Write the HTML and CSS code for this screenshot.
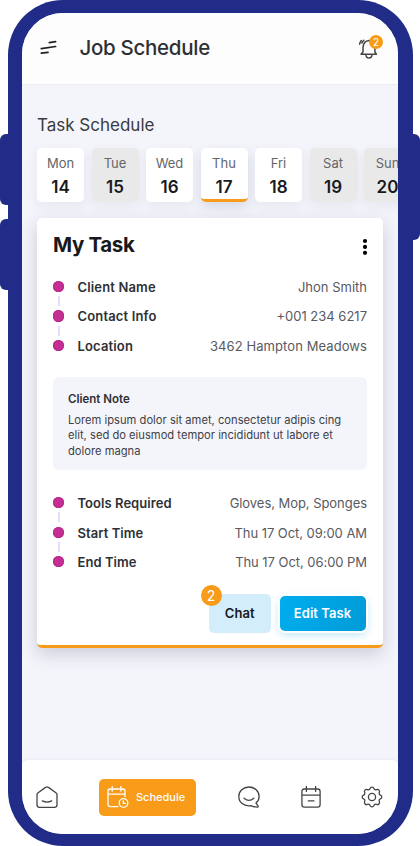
FILE: index.html
```html
<!DOCTYPE html>
<html lang="en">
<head>
<meta charset="utf-8">
<title>Job Schedule</title>
<link rel="stylesheet" href="styles.css">
</head>
<body>
<div class="device">
  <span class="key key-up"></span><span class="key key-down"></span><span class="key key-power"></span>
  <main class="screen">
    <header class="topbar">
      <svg class="menu" viewBox="0 0 18 16" width="18" height="16"><path d="M9.3 2.6L15.6 1.7M1.3 8.6L15.6 6.5M1.3 13.2L8 12.3"/></svg>
      <h1>Job Schedule</h1>
      <div class="bell">
        <svg viewBox="0 0 22 22" width="22" height="22"><path d="M3 17.2H18.4L16.9 15V10.2Q16.6 3.6 11 3.4Q5.6 3.8 5 10.2V15L3 17.2M7.8 17.5Q8.1 21 11 21Q13.9 21 14.1 17.5M1.6 7.2Q2 5 3.3 3.5M3.9 6.1Q4.6 4.3 5.8 3.2"/></svg>
        <span>2</span>
      </div>
    </header>
    <section class="content">
      <h2>Task Schedule</h2>
      <div class="days">
        <div class="day"><span>Mon</span><b>14</b></div>
        <div class="day off"><span>Tue</span><b>15</b></div>
        <div class="day"><span>Wed</span><b>16</b></div>
        <div class="day active"><span>Thu</span><b>17</b></div>
        <div class="day"><span>Fri</span><b>18</b></div>
        <div class="day off"><span>Sat</span><b>19</b></div>
        <div class="day off"><span>Sun</span><b>20</b></div>
      </div>
      <article class="card">
        <div class="card-head"><h3>My Task</h3>
          <svg width="6" height="18" viewBox="0 0 6 18"><circle cx="3" cy="3" r="2.1"/><circle cx="3" cy="8.9" r="2.1"/><circle cx="3" cy="14.8" r="2.1"/></svg>
        </div>
        <dl class="facts client">
          <div><dt>Client Name</dt><dd>Jhon Smith</dd></div>
          <div><dt>Contact Info</dt><dd>+001 234 6217</dd></div>
          <div><dt>Location</dt><dd class="address">3462 Hampton Meadows</dd></div>
        </dl>
        <div class="note"><h4>Client Note</h4>
          <p>Lorem ipsum dolor sit amet, consectetur adipis cing<br>elit, sed do eiusmod tempor incididunt ut labore et<br>dolore magna</p>
        </div>
        <dl class="facts job">
          <div><dt>Tools Required</dt><dd>Gloves, Mop, Sponges</dd></div>
          <div><dt>Start Time</dt><dd>Thu 17 Oct, 09:00 AM</dd></div>
          <div><dt>End Time</dt><dd>Thu 17 Oct, 06:00 PM</dd></div>
        </dl>
        <div class="actions">
          <button class="chat">Chat<span>2</span></button>
          <button class="edit">Edit Task</button>
        </div>
      </article>
    </section>
    <nav class="tabs">
      <svg class="home" width="24" height="24" viewBox="0 0 24 24"><path d="M4.5 22.3Q2 22.3 2 19.8V9.4Q2 8.6 2.8 8L10.5 2.4Q12 1.2 13.5 2.4L21.2 8Q22 8.6 22 9.4V19.8Q22 22.3 19.5 22.3ZM7.3 15.9Q12 18.3 16.7 15.9"/></svg>
      <a class="current">
        <svg width="23" height="24" viewBox="0 0 23 24"><path d="M12 21.6H4.2Q2 21.6 2 19.4V6.2Q2 4 4.2 4H16.9Q19 4 19 6.2V11.5M2 9.2H19M6.2 1.5V6M14.9 1.5V6"/><circle cx="17.5" cy="18" r="4.3"/><path d="M17.3 15.8V18.4H19.3"/></svg>
        <span>Schedule</span>
      </a>
      <svg class="talk" width="24" height="24" viewBox="0 0 24 24"><path d="M19 18.1L21 20.8Q21.5 22.2 20.2 22.1Q16.8 22 13.8 20.6C6.8 21.8 1.8 17.1 1.8 11.4C1.8 6.1 6.2 2 11.9 2C17.6 2 22.1 6.1 22.1 11.4Q22.1 15.3 19 18.1ZM7 13.2Q12 17.4 16.8 13.2"/></svg>
      <svg class="calendar" width="24" height="24" viewBox="0 0 24 24"><path d="M5.3 4H18.7Q21.1 4 21.1 6.4V19.8Q21.1 22.2 18.7 22.2H5.3Q2.9 22.2 2.9 19.8V6.4Q2.9 4 5.3 4ZM2.9 10.2H21.1M7.4 1.5V6.4M16.6 1.5V6.4M9.3 15.9H15"/></svg>
      <svg class="gear" width="24" height="24" viewBox="0 0 24 24"><path d="M10.04 3.52A2.1 2.1 0 0 1 13.96 3.52A1.9 1.9 0 0 0 16.61 4.62A2.1 2.1 0 0 1 19.38 7.39A1.9 1.9 0 0 0 20.48 10.04A2.1 2.1 0 0 1 20.48 13.96A1.9 1.9 0 0 0 19.38 16.61A2.1 2.1 0 0 1 16.61 19.38A1.9 1.9 0 0 0 13.96 20.48A2.1 2.1 0 0 1 10.04 20.48A1.9 1.9 0 0 0 7.39 19.38A2.1 2.1 0 0 1 4.62 16.61A1.9 1.9 0 0 0 3.52 13.96A2.1 2.1 0 0 1 3.52 10.04A1.9 1.9 0 0 0 4.62 7.39A2.1 2.1 0 0 1 7.39 4.62A1.9 1.9 0 0 0 10.04 3.52Z"/><circle cx="12" cy="12" r="3.6"/></svg>
    </nav>
  </main>
</div>
</body>
</html>
```
FILE: styles.css
```css
* { box-sizing: border-box; margin: 0; }
body { background: #fff; font-family: Inter, "Liberation Sans", sans-serif; color: #2e3035; height: 846px; overflow: hidden; }
.device { position: relative; width: 405px; height: 846px; margin-left: 7.5px; padding: 12.5px 14.5px; background: #202c87; border-radius: 55px; }
.key { position: absolute; background: #202c87; }
.key-up, .key-down { left: -7.5px; width: 10px; height: 71px; border-radius: 6px 0 0 6px; }
.key-up { top: 134px; }
.key-down { top: 218.5px; }
.key-power { right: -7.5px; top: 133.5px; width: 10px; height: 106.5px; border-radius: 0 6px 6px 0; }
.screen { height: 821px; overflow: hidden; border-radius: 41px; background: #f4f5fb; display: flex; flex-direction: column; }
svg { fill: none; stroke: #444; stroke-width: 1.3; stroke-linecap: round; stroke-linejoin: round; flex: none; }
.topbar { height: 72px; display: flex; align-items: center; padding: 0 15px 0 18px; background: #fdfdfd; border-bottom: 1.5px solid #ececee; }
.menu { stroke: #222; stroke-width: 1.7; }
h1 { font-size: 20.5px; font-weight: 450; margin-left: 21.5px; letter-spacing: -.3px; line-height: 26px; }
.bell { position: relative; width: 26px; height: 24px; margin-left: auto; }
.bell svg { margin: 1px 0 0 1px; stroke-width: 1.5; }
.bell span { position: absolute; right: 0; top: -1px; width: 14px; height: 14px; border-radius: 50%; background: #f89b18; color: #fff; font-size: 10px; line-height: 14px; text-align: center; }
.content { flex: 1; min-height: 0; padding: 29px 15px 0; }
h2 { font-size: 17px; line-height: 22px; font-weight: 400; color: #393b40; }
.days { display: flex; gap: 7.5px; margin-top: 12px; width: 376px; }
.day { flex: none; width: 47px; height: 54.5px; background: #fff; border-radius: 5px; display: flex; flex-direction: column; align-items: center; padding-top: 6px; box-shadow: 0 4px 12px #25305c12; }
.day span { font-size: 13px; line-height: 18px; color: #64656a; }
.day b { font-size: 17px; font-weight: 600; line-height: 22px; margin-top: 4px; color: #18191c; }
.off { background: #e9e9ea; }
.active { border-bottom: 3px solid #f89b18; box-shadow: 0 5px 12px #25305c25; }
.card { position: relative; height: 430px; margin-top: 15.5px; padding: 14px 16px 0; background: #fff; border-radius: 5px; border-bottom: 3px solid #f89b18; box-shadow: 0 6px 18px #25284b33; }
.card-head { display: flex; justify-content: space-between; align-items: center; height: 26px; }
.card-head svg { fill: #000; stroke: none; margin-top: 5px; margin-right: -1px; }
h3 { font-size: 20.5px; font-weight: 700; letter-spacing: -.35px; color: #18191c; }
.facts { display: grid; font-size: 13px; }
.client { grid-template-rows: 29px 30px 29px; margin-top: 14.5px; }
.job { grid-template-rows: 31px 29px 29px; margin-top: 17px; }
.facts div { position: relative; display: flex; align-items: center; }
.facts div::before { content: ""; width: 11.5px; height: 11.5px; border-radius: 50%; background: #c52e93; box-shadow: inset 0 0 0 1px #b6298a; margin: 0 13.5px 0 -.5px; }
.facts div:not(:last-child)::after { content: ""; position: absolute; left: 4.5px; top: calc(50% + 9.5px); width: 2px; height: 10px; background: #eadcf8; }
dt { font-weight: 600; letter-spacing: .15px; color: #2e3035; }
.job dt { letter-spacing: .05px; }
dd { margin-left: auto; color: #595a5f; }
.job dd { letter-spacing: -.05px; }
.address { letter-spacing: .08px; }
.note { height: 93px; margin-top: 17px; padding: 14px 15px; border-radius: 6px; background: #f4f5fb; }
h4 { font-size: 11.5px; line-height: 16px; font-weight: 600; }
p { font-size: 11.2px; line-height: 15.5px; margin-top: 5.5px; white-space: nowrap; color: #3f4146; }
.actions { display: flex; justify-content: flex-end; align-items: center; gap: 9px; margin-top: 17.5px; padding-right: 1.5px; }
button { border: 0; font: 600 13px Inter, sans-serif; padding: 0; border-radius: 5px; }
.chat { position: relative; width: 61.5px; height: 39px; background: #d3eefa; color: #18191c; letter-spacing: .1px; }
.chat span { position: absolute; left: -8.5px; top: -9px; width: 21px; height: 21px; border-radius: 50%; background: #f89b18; color: #fff; font-weight: 400; font-size: 14px; line-height: 21px; }
.edit { width: 86px; height: 35px; letter-spacing: .05px; background: linear-gradient(110deg, #00adef, #009bd7); color: #fff; box-shadow: 0 0 0 2px #fff, 0 3px 10px #00a6e650; }
.tabs { flex: none; display: flex; align-items: center; height: 73.5px; background: #fff; border-radius: 6px 6px 0 0; padding: 0 14px 0 12.5px; box-shadow: 0 -1px 2px #1f29660d; }
.current { display: flex; flex: none; align-items: center; width: 96.5px; height: 37px; margin: 1px 0 0 40.5px; padding-left: 7px; gap: 7px; background: #f89b18; border-radius: 5px; color: #fff; font-size: 11px; font-weight: 500; }
.current svg { stroke: #fff; }
.talk { margin-left: 41.5px; }
.calendar { margin-left: 37.5px; }
.gear { margin-left: 37px; }
```
